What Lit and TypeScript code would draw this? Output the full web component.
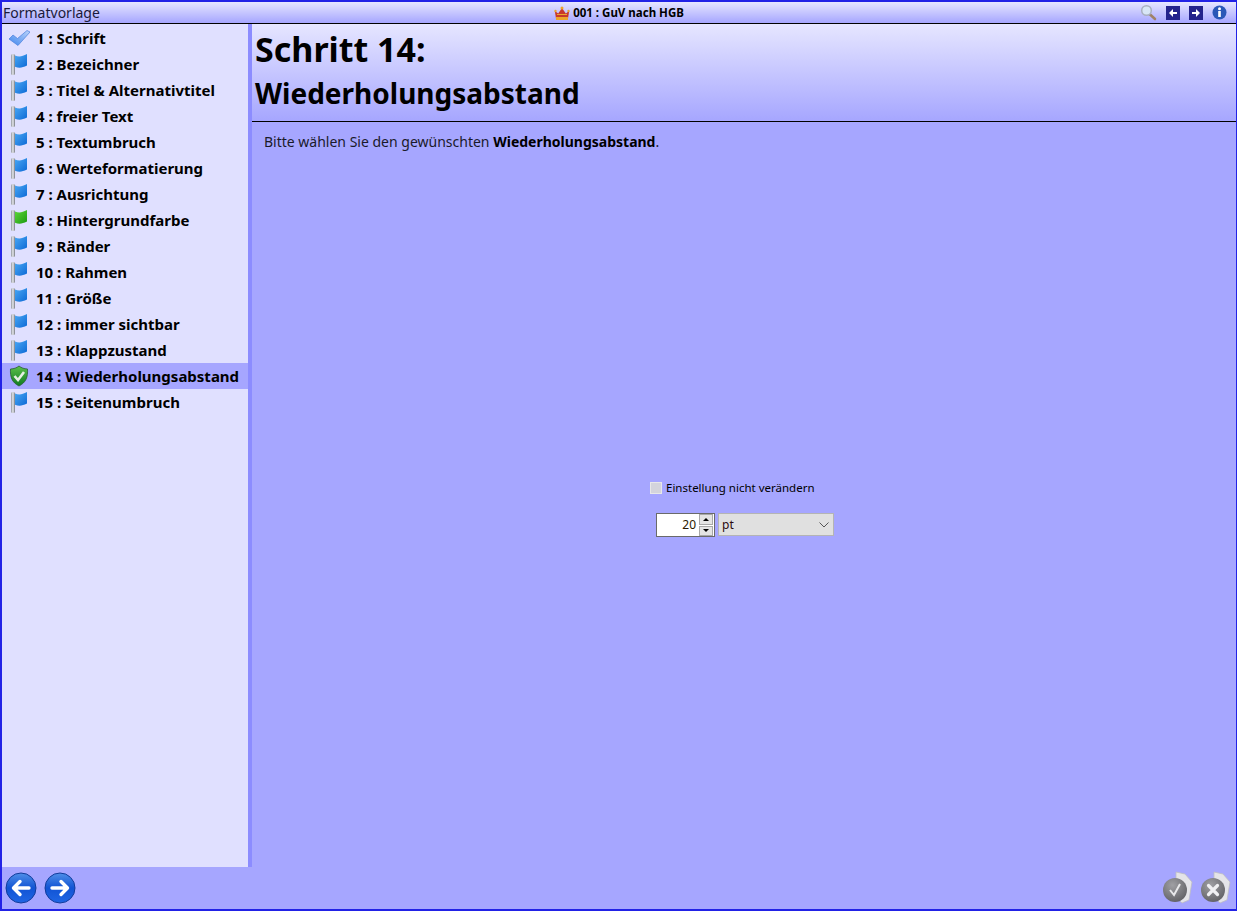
import { LitElement, css, html, svg, type TemplateResult } from 'lit';
import { customElement } from 'lit/decorators.js';

const steps = [
  'Schrift',
  'Bezeichner',
  'Titel & Alternativtitel',
  'freier Text',
  'Textumbruch',
  'Werteformatierung',
  'Ausrichtung',
  'Hintergrundfarbe',
  'Ränder',
  'Rahmen',
  'Größe',
  'immer sichtbar',
  'Klappzustand',
  'Wiederholungsabstand',
  'Seitenumbruch',
];

const flag = (top: string, bottom: string) => html`<svg width="22" height="24" viewBox="0 0 22 24">
  <defs>
    <linearGradient id="pole${top.slice(1)}" x1="0" x2="1" y1="0" y2="0">
      <stop offset="0" stop-color="#8f949c" />
      <stop offset=".5" stop-color="#e8eaee" />
      <stop offset="1" stop-color="#70747c" />
    </linearGradient>
    <linearGradient id="cloth${top.slice(1)}" x1="0" x2="1" y1="0" y2="1">
      <stop offset="0" stop-color="${top}" />
      <stop offset="1" stop-color="${bottom}" />
    </linearGradient>
  </defs>
  <rect x="3" y="2" width="4" height="21" rx="1.5" fill="url(#pole${top.slice(1)})" />
  <path d="M7 3.5c4 1.6 7 1.2 12-1.5v11.500c-5 2.500-8 2.700-12 1.200z" fill="url(#cloth${top.slice(1)})" />
</svg>`;

const check = html`<svg width="22" height="24" viewBox="0 0 22 24">
  <defs>
    <linearGradient id="tick" x1="0" x2="1" y1="1" y2="0">
      <stop offset="0" stop-color="#3f86ee" />
      <stop offset="1" stop-color="#bcd4fa" />
    </linearGradient>
  </defs>
  <path d="M1 13l4-4 4.500 3.500L19 4.500l3 1.500-12 13.500z" fill="url(#tick)" stroke="#4a7fdc" stroke-width=".7" />
</svg>`;

const shield = html`<svg width="22" height="24" viewBox="0 0 22 24">
  <defs>
    <linearGradient id="shield" x1="0" x2="0" y1="0" y2="1">
      <stop offset="0" stop-color="#5cc04a" />
      <stop offset="1" stop-color="#0f7a22" />
    </linearGradient>
  </defs>
  <path d="M11 2c2.500 2 5 2.800 8.500 3 .5 8-1.500 13.500-8.500 17C4 18.500 2 13 2.500 5c3.500-.2 6-1 8.500-3z" fill="url(#shield)" stroke="#2a5a34" stroke-width=".8" />
  <path d="M6.500 12l3.500 4 6-8" fill="none" stroke="#e6efe4" stroke-width="2.600" />
</svg>`;

const roundArrow = (d: string) => html`<svg width="32" height="32" viewBox="0 0 32 32">
  <defs>
    <linearGradient id="ball" x1="0" x2="0" y1="0" y2="1">
      <stop offset="0" stop-color="#4f8fe8" />
      <stop offset=".5" stop-color="#1254d4" />
      <stop offset="1" stop-color="#1f66e4" />
    </linearGradient>
  </defs>
  <circle cx="16" cy="16" r="15" fill="url(#ball)" stroke="#123c9c" />
  <path d="${d}" fill="none" stroke="#fff" stroke-width="3.400" stroke-linecap="round" stroke-linejoin="round" />
</svg>`;

const greyBadge = (mark: TemplateResult) => html`<svg width="32" height="34" viewBox="0 0 32 34">
  <defs>
    <radialGradient id="disc" cx=".4" cy=".3" r=".8">
      <stop offset="0" stop-color="#a0a0a4" />
      <stop offset="1" stop-color="#5c5c60" />
    </radialGradient>
  </defs>
  <path d="M14 1l9 2 7 8-3 18-7 3-6-6z" fill="#e4e4e8" stroke="#bcbcc4" stroke-width=".8" />
  <circle cx="13" cy="19" r="12" fill="url(#disc)" />
  ${mark}
</svg>`;

@customElement('app-root')
export class AppRoot extends LitElement {
  private stepIcon(index: number): TemplateResult {
    if (index === 0) return check;
    if (index === 13) return shield;
    if (index === 7) return flag('#5fd83a', '#1c9a12');
    return flag('#4aa8f4', '#0d6ad6');
  }

  render(): TemplateResult {
    return html`<div class="window">
      <header class="titlebar">
        <span class="title-left">Formatvorlage</span>
        <span class="title-center">
          <svg width="16" height="16" viewBox="0 0 16 16">
            <path d="M2 13.500L.8 6l3.400 2.500L8 3l3.800 5.500L15.200 6 14 13.500z" fill="#c8382a" />
            <path d="M2 12h12v3H2z" fill="#eba52c" />
            <circle cx="8" cy="3" r="1.500" fill="#eba52c" />
            <circle cx="1.500" cy="6" r="1.200" fill="#eba52c" />
            <circle cx="14.500" cy="6" r="1.200" fill="#eba52c" />
            <path d="M3 9.500h10" stroke="#eba52c" stroke-width="1" />
          </svg>
          001 : GuV nach HGB
        </span>
        <span class="title-tools">
          <svg width="17" height="17" viewBox="0 0 17 17">
            <path d="M9.500 10l5.500 5" stroke="#a08268" stroke-width="2.600" stroke-linecap="round" />
            <circle cx="6.500" cy="6.500" r="4.800" fill="#d8e6f6" stroke="#a8b0c0" stroke-width="1.500" />
          </svg>
          <svg class="square" width="14" height="14" viewBox="0 0 14 14">
            <rect width="14" height="14" fill="#23238c" />
            <path d="M11 6v2H7v3L3 7l4-4v3z" fill="#fff" />
          </svg>
          <svg class="square" width="14" height="14" viewBox="0 0 14 14">
            <rect width="14" height="14" fill="#23238c" />
            <path d="M3 6v2h4v3l4-4-4-4v3z" fill="#fff" />
          </svg>
          <svg width="15" height="15" viewBox="0 0 15 15">
            <circle cx="7.500" cy="7.500" r="7" fill="#2a58b8" />
            <rect x="6.200" y="6" width="2.600" height="6" fill="#fff" />
            <circle cx="7.500" cy="3.800" r="1.500" fill="#fff" />
          </svg>
        </span>
      </header>

      <div class="middle">
        <nav class="sidebar">
          ${steps.map(
            (label, i) => html`<div class="step ${i === 13 ? 'active' : ''}">
              <span class="step-icon">${this.stepIcon(i)}</span>
              <span>${i + 1} : ${label}</span>
            </div>`,
          )}
        </nav>
        <main class="content">
          <div class="banner">
            <h1>Schritt 14:</h1>
            <h2>Wiederholungsabstand</h2>
          </div>
          <p class="intro">Bitte wählen Sie den gewünschten <b>Wiederholungsabstand</b>.</p>
          <div class="form">
            <label class="keep"><span class="box"></span>Einstellung nicht verändern</label>
            <div class="controls">
              <div class="spin">
                <span class="spin-value">20</span>
                <span class="spin-buttons">
                  <span class="spin-btn"><i class="up"></i></span>
                  <span class="spin-btn"><i class="down"></i></span>
                </span>
              </div>
              <div class="select">
                <span>pt</span>
                <svg width="10" height="6" viewBox="0 0 10 6">
                  <path d="M.5.500L5 5 9.500.500" fill="none" stroke="#555" />
                </svg>
              </div>
            </div>
          </div>
        </main>
      </div>

      <footer class="footer">
        <span class="nav-buttons">
          ${roundArrow('M24 16H9m6-6.500L8.500 16l6.500 6.500')}
          ${roundArrow('M8 16h15m-6-6.500l6.500 6.500-6.500 6.500')}
        </span>
        <span class="action-buttons">
          ${greyBadge(svg`<path d="M8 19l4 5 6-11" fill="none" stroke="#e8e8ea" stroke-width="2" />`)}
          ${greyBadge(svg`<path d="M8.500 14.500l9 9m0-9l-9 9" fill="none" stroke="#f0f0f2" stroke-width="3.200" stroke-linecap="round" />`)}
        </span>
      </footer>
    </div>`;
  }

  static styles = css`
    :host {
      display: block;
      font-family: 'Noto Sans', 'Open Sans', sans-serif;
      color: #000;
    }

    .window {
      box-sizing: border-box;
      width: 1237px;
      height: 911px;
      display: flex;
      flex-direction: column;
      border: 2px solid #2222e6;
      border-right-width: 1px;
      background: #a6a6ff;
    }

    .titlebar {
      flex: none;
      height: 21px;
      display: grid;
      grid-template-columns: 1fr auto 1fr;
      align-items: center;
      border-bottom: 1px solid #000;
      background: linear-gradient(#e6e6ff, #a6a6ff);
    }

    .title-left {
      font-size: 14px;
      line-height: 21px;
      padding-left: 1px;
      color: #1a1a3a;
    }

    .title-center {
      display: flex;
      align-items: center;
      gap: 3px;
      font-size: 11.500px;
      font-weight: 700;
    }

    .title-tools {
      display: flex;
      align-items: center;
      justify-content: flex-end;
      gap: 9px;
      padding-right: 9px;
    }

    .middle {
      flex: 1;
      min-height: 0;
      display: flex;
    }

    .sidebar {
      flex: none;
      box-sizing: border-box;
      width: 250px;
      border-right: 4px solid #8c8cff;
      background: #e0e0ff;
      padding-top: 1px;
    }

    .step {
      height: 26px;
      display: flex;
      align-items: center;
      padding-left: 6px;
      gap: 6px;
      font-size: 15px;
      font-weight: 700;
      white-space: nowrap;
    }

    .step.active {
      background: #a6a6ff;
    }

    .step-icon {
      display: flex;
      width: 22px;
      height: 24px;
    }

    .content {
      flex: 1;
      min-width: 0;
      display: flex;
      flex-direction: column;
    }

    .banner {
      flex: none;
      height: 98px;
      box-sizing: border-box;
      padding-left: 3px;
      border-bottom: 1px solid #000;
      background: linear-gradient(#e6e6ff, #a6a6ff);
    }

    h1,
    h2 {
      margin: 0;
      font-weight: 700;
      white-space: nowrap;
    }

    h1 {
      font-size: 34px;
      line-height: 50px;
    }

    h2 {
      font-size: 28px;
      line-height: 38px;
    }

    .intro {
      margin: 10px 0 0 12px;
      font-size: 14px;
      line-height: 20px;
      color: #1a1a2a;
    }

    .intro b {
      color: #000;
    }

    .form {
      flex: 1;
      display: flex;
      flex-direction: column;
      align-items: flex-start;
      padding: 328px 0 0 398px;
    }

    .keep {
      display: flex;
      align-items: center;
      gap: 4px;
      font-size: 11.500px;
      line-height: 16px;
    }

    .box {
      box-sizing: border-box;
      width: 12px;
      height: 12px;
      border: 1px solid #e8e8e8;
      background: #d4d4dc;
    }

    .controls {
      display: flex;
      align-items: stretch;
      gap: 3px;
      margin: 17px 0 0 6px;
    }

    .spin {
      box-sizing: border-box;
      width: 59px;
      height: 24px;
      display: flex;
      border: 1px solid #6a6a6a;
      background: #fff;
    }

    .spin-value {
      flex: 1;
      text-align: right;
      padding-right: 3px;
      font-size: 12px;
      line-height: 22px;
      color: #2a1a00;
    }

    .spin-buttons {
      display: flex;
      flex-direction: column;
      gap: 1px;
      width: 14px;
      background: #fff;
      padding-right: 1px;
    }

    .spin-btn {
      flex: 1;
      display: flex;
      align-items: center;
      justify-content: center;
      background: #e4e4e4;
      border: 1px solid #a8a8a8;
    }

    .spin-btn i {
      width: 0;
      height: 0;
      border-left: 3px solid transparent;
      border-right: 3px solid transparent;
    }

    .spin-btn .up {
      border-bottom: 3px solid #000;
    }

    .spin-btn .down {
      border-top: 3px solid #000;
    }

    .select {
      box-sizing: border-box;
      width: 116px;
      height: 23px;
      display: flex;
      align-items: center;
      justify-content: space-between;
      padding: 0 4px 0 3px;
      border: 1px solid #b4b4b4;
      background: #e0e0e0;
      font-size: 12px;
      color: #2a0a10;
    }

    .footer {
      flex: none;
      height: 42px;
      display: flex;
      align-items: center;
      justify-content: space-between;
      background: #a6a6ff;
    }

    .nav-buttons {
      display: flex;
      gap: 7px;
      padding-left: 3px;
    }

    .action-buttons {
      display: flex;
      gap: 6px;
      padding-right: 4px;
    }
  `;
}

declare global {
  interface HTMLElementTagNameMap {
    'app-root': AppRoot;
  }
}
